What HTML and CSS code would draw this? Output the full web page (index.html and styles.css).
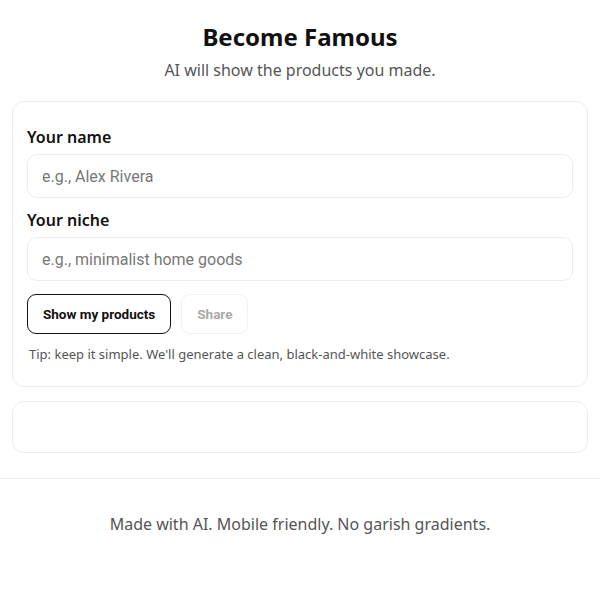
FILE: index.html
```html
<!DOCTYPE html>
<html lang="en">
<head>
<meta charset="utf-8">
<title>Become Famous</title>
<link rel="stylesheet" href="styles.css">
</head>
<body>
<main class="page">
  <header class="hero">
    <h1 class="title">Become Famous</h1>
    <p class="subtitle">AI will show the products you made.</p>
  </header>
  <section class="card form-card">
    <label class="label" for="name">Your name</label>
    <input class="field" id="name" type="text" placeholder="e.g., Alex Rivera">
    <label class="label label-second" for="niche">Your niche</label>
    <input class="field" id="niche" type="text" placeholder="e.g., minimalist home goods">
    <div class="actions">
      <button class="btn btn-primary" type="button">Show my products</button>
      <button class="btn btn-disabled" type="button" disabled>Share</button>
    </div>
    <p class="tip">Tip: keep it simple. We'll generate a clean, black-and-white showcase.</p>
  </section>
  <section class="card result-card"></section>
</main>
<footer class="footer">
  <p class="footer-text">Made with AI. Mobile friendly. No garish gradients.</p>
</footer>
</body>
</html>
```

FILE: styles.css
```css
* { box-sizing: border-box; }
html, body { margin: 0; padding: 0; background: #fff; }
body {
  font-family: "Noto Sans", "DejaVu Sans", sans-serif;
  color: #111;
}
.page {
  padding: 21px 12px 0;
  display: flex;
  flex-direction: column;
  gap: 14px;
}
.hero {
  text-align: center;
  margin-bottom: -14px;
}
.title {
  margin: 0;
  font-size: 24px;
  line-height: 31px;
  font-weight: 700;
  color: #111;
}
.subtitle {
  margin: 7px 0 20px;
  font-size: 16px;
  line-height: 22px;
  color: #555;
}
.card {
  border: 1px solid #ececec;
  border-radius: 12px;
  background: #fff;
}
.form-card {
  padding: 24px 14px 23px;
  display: flex;
  flex-direction: column;
}
.label {
  font-size: 16px;
  line-height: 22px;
  font-weight: 600;
  color: #111;
  margin-bottom: 6px;
}
.label-second { margin-top: 11px; }
.field {
  height: 44px;
  width: 100%;
  border: 1px solid #ececec;
  border-radius: 10px;
  padding: 0 14px;
  font-family: Roboto, "Noto Sans", sans-serif;
  font-size: 16px;
  color: #111;
  background: #fff;
  outline: none;
}
.field::placeholder { color: #777; }
.actions {
  display: flex;
  gap: 10px;
  margin-top: 13px;
}
.btn {
  height: 40px;
  border-radius: 9px;
  font-family: Roboto, "Noto Sans", sans-serif;
  font-size: 13.5px;
  font-weight: 700;
  background: #fff;
  padding: 0 15px;
  white-space: nowrap;
}
.btn-primary {
  border: 1.5px solid #111;
  color: #111;
}
.btn-disabled {
  border: 1px solid #f2f2f2;
  color: #aaa;
}
.tip {
  margin: 11px 0 0 2px;
  font-size: 13px;
  line-height: 18px;
  color: #555;
}
.result-card {
  height: 52px;
}
.footer {
  margin-top: 25px;
  border-top: 1px solid #ececec;
  padding-top: 34px;
  text-align: center;
}
.footer-text {
  margin: 0;
  font-size: 16px;
  line-height: 22px;
  color: #555;
}
```
